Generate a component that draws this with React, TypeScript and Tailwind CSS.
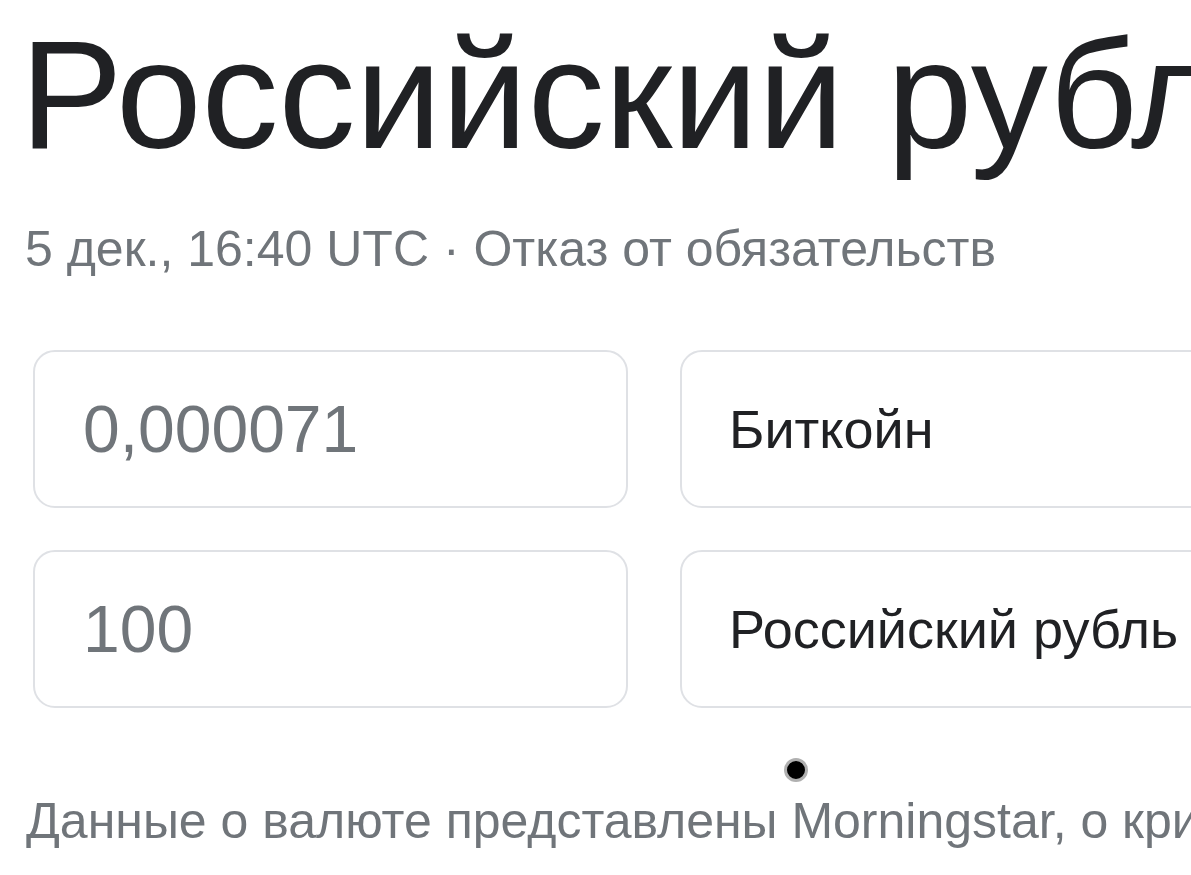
export default function App() {
  return (
    <div className="h-[875px] w-full overflow-hidden bg-white font-['Liberation_Sans',Arial,sans-serif]">
      <h1 className="mt-[18px] whitespace-nowrap pl-[20px] text-[154px] font-normal leading-none text-[#202124]">
        Российский рубль
      </h1>

      <div className="mt-[52px] whitespace-nowrap pl-[25px] text-[50px] leading-none text-[#70757a]">
        5 дек., 16:40 UTC · Отказ от обязательств
      </div>

      <div className="mt-[76px] flex flex-col gap-[42px] pl-[33px]">
        <div className="flex gap-[52px]">
          <div className="flex h-[158px] w-[595px] shrink-0 items-center rounded-[22px] border-2 border-[#dfe1e5] pl-[48px] text-[66px] leading-none text-[#70757a]">
            0,000071
          </div>
          <div className="flex h-[158px] w-[600px] shrink-0 items-center rounded-[22px] border-2 border-[#dfe1e5] pl-[47px] text-[54px] leading-none text-[#202124]">
            Биткойн
          </div>
        </div>
        <div className="flex gap-[52px]">
          <div className="flex h-[158px] w-[595px] shrink-0 items-center rounded-[22px] border-2 border-[#dfe1e5] pl-[48px] text-[66px] leading-none text-[#70757a]">
            100
          </div>
          <div className="flex h-[158px] w-[600px] shrink-0 items-center whitespace-nowrap rounded-[22px] border-2 border-[#dfe1e5] pl-[47px] text-[54px] leading-none text-[#202124]">
            Российский рубль
          </div>
        </div>
      </div>

      <div className="mt-[50px] flex pl-[784px]">
        <span className="h-[24px] w-[24px] rounded-full border-[3px] border-[#b0b0b0] bg-black" />
      </div>

      <p className="mt-[14px] whitespace-nowrap pl-[26px] text-[50px] leading-none text-[#70757a]">
        Данные о валюте представлены Morningstar, о криптовалюте – Coinbase
      </p>
    </div>
  );
}
